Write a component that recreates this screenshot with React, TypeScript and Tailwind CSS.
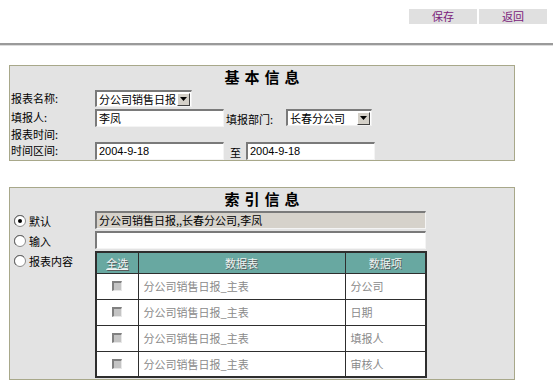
import React from "react";

const font = { fontFamily: '"Noto Sans CJK SC", "Liberation Sans", sans-serif' };

function Inset({ w, children, gray }: { w: string; children?: React.ReactNode; gray?: boolean }) {
  return (
    <div
      className={`${w} h-[18px] flex items-center pl-[2px] text-[11px] leading-none text-black border-t-2 border-l-2 border-t-[#7a7a7a] border-l-[#7a7a7a] border-b border-r border-b-[#f4f4f4] border-r-[#f4f4f4] ${gray ? "bg-[#d6d2cb]" : "bg-white"}`}
    >
      {children}
    </div>
  );
}

function Select({ w, text }: { w: string; text: string }) {
  return (
    <div className={`${w} h-[17px] flex items-center justify-between bg-white border-t-2 border-l-2 border-t-[#7a7a7a] border-l-[#7a7a7a] border-b border-r border-b-[#f0f0f0] border-r-[#f0f0f0]`}>
      <span className="pl-[2px] text-[11px] leading-none text-black whitespace-nowrap">{text}</span>
      <div className="w-[13px] h-[13px] mr-[1px] shrink-0 bg-[#d4d0c8] border-t border-l border-t-white border-l-white border-b border-r border-b-[#404040] border-r-[#404040] flex items-center justify-center">
        <svg width="7" height="4" viewBox="0 0 7 4"><path d="M0 0h7L3.5 4z" fill="#000" /></svg>
      </div>
    </div>
  );
}

function Radio({ checked }: { checked?: boolean }) {
  return (
    <svg width="12" height="12" viewBox="0 0 12 12" className="shrink-0">
      <circle cx="6" cy="6" r="5.5" fill="#fff" stroke="#8a8a8a" />
      <path d="M2 10A5.5 5.5 0 0 1 10 2" stroke="#6a6a6a" fill="none" />
      {checked && <circle cx="6" cy="6" r="2" fill="#000" />}
    </svg>
  );
}

function Check() {
  return <div className="w-[10px] h-[10px] bg-[#c4c4c4] border-t-2 border-l-2 border-t-[#808080] border-l-[#808080] border-b border-r border-b-[#e8e8e8] border-r-[#e8e8e8]" />;
}

export default function App() {
  const rows = ["分公司", "日期", "填报人", "审核人"];
  return (
    <div className="w-[553px] h-[387px] bg-white overflow-hidden text-black" style={font}>
      <div className="flex justify-end gap-[2px] pt-[9px] pr-[6px]">
        <div className="w-[68px] h-[15px] bg-[#e0e0e0] text-[#7a1a7a] text-[11px] leading-[15px] text-center">保存</div>
        <div className="w-[68px] h-[15px] bg-[#e0e0e0] text-[#7a1a7a] text-[11px] leading-[15px] text-center">返回</div>
      </div>
      <div className="mt-[19px] h-[2px] bg-[#9a9a9a] border-b border-[#dcdcdc] box-content" />

      {/* Panel 1 */}
      <div className="ml-[9px] mt-[19px] w-[506px] h-[96px] border border-[#a8a88a] bg-[#e3e3e3] flex flex-col">
        <div className="h-[23px] flex items-center justify-center text-[15px] font-bold tracking-[5px] pl-[5px]">基本信息</div>
        <div className="h-[19px] flex items-center">
          <div className="w-[85px] text-[11px] pl-[1px]">报表名称:</div>
          <Select w="w-[97px]" text="分公司销售日报" />
        </div>
        <div className="h-[19px] flex items-center">
          <div className="w-[85px] text-[11px] pl-[1px]">填报人:</div>
          <Inset w="w-[129px]">李凤</Inset>
          <div className="w-[62px] pl-[2px] text-[11px] self-end">填报部门:</div>
          <Select w="w-[86px]" text="长春分公司" />
        </div>
        <div className="h-[14px] flex items-center">
          <div className="w-[85px] text-[11px] pl-[1px]">报表时间:</div>
        </div>
        <div className="h-[19px] flex items-center">
          <div className="w-[85px] text-[11px] pl-[1px]">时间区间:</div>
          <Inset w="w-[129px]"><span style={{ fontFamily: '"Liberation Sans", sans-serif' }}>2004-9-18</span></Inset>
          <div className="w-[22px] text-[11px] pl-[6px] self-end">至</div>
          <Inset w="w-[129px]"><span style={{ fontFamily: '"Liberation Sans", sans-serif' }}>2004-9-18</span></Inset>
        </div>
      </div>

      {/* Panel 2 */}
      <div className="ml-[9px] mt-[26px] w-[506px] h-[193px] border border-[#a8a88a] bg-[#e3e3e3] flex flex-col">
        <div className="h-[23px] flex items-center justify-center text-[15px] font-bold tracking-[5px] pl-[5px]">索引信息</div>
        <div className="flex">
          <div className="w-[85px] flex flex-col">
            <div className="h-[20px] flex items-center gap-[3px] pl-[4px] text-[11px]"><Radio checked />默认</div>
            <div className="h-[20px] flex items-center gap-[3px] pl-[4px] text-[11px]"><Radio />输入</div>
            <div className="h-[20px] flex items-center gap-[3px] pl-[4px] text-[11px]"><Radio />报表内容</div>
          </div>
          <div className="flex flex-col gap-[2px]">
            <Inset w="w-[331px]" gray>分公司销售日报,,长春分公司,李凤</Inset>
            <Inset w="w-[331px]" />
            <table className="w-[332px] border-collapse text-[11px] border-2 border-[#2e2e2e]">
              <thead>
                <tr className="h-[21px] bg-[#68a8a1] text-[#eef4f3] [text-shadow:1px_1px_0_#5a5a5a]">
                  <th className="w-[42px] border border-[#2e2e2e] font-normal underline">全选</th>
                  <th className="w-[207px] border border-[#2e2e2e] font-normal">数据表</th>
                  <th className="border border-[#2e2e2e] font-normal">数据项</th>
                </tr>
              </thead>
              <tbody>
                {rows.map((r) => (
                  <tr key={r} className="h-[26px] bg-white text-[#8a8a8a]">
                    <td className="border border-[#2e2e2e]"><div className="flex justify-center"><Check /></div></td>
                    <td className="border border-[#2e2e2e] pl-[5px]">分公司销售日报_主表</td>
                    <td className="border border-[#2e2e2e] pl-[5px]">{r}</td>
                  </tr>
                ))}
              </tbody>
            </table>
          </div>
        </div>
      </div>
    </div>
  );
}
